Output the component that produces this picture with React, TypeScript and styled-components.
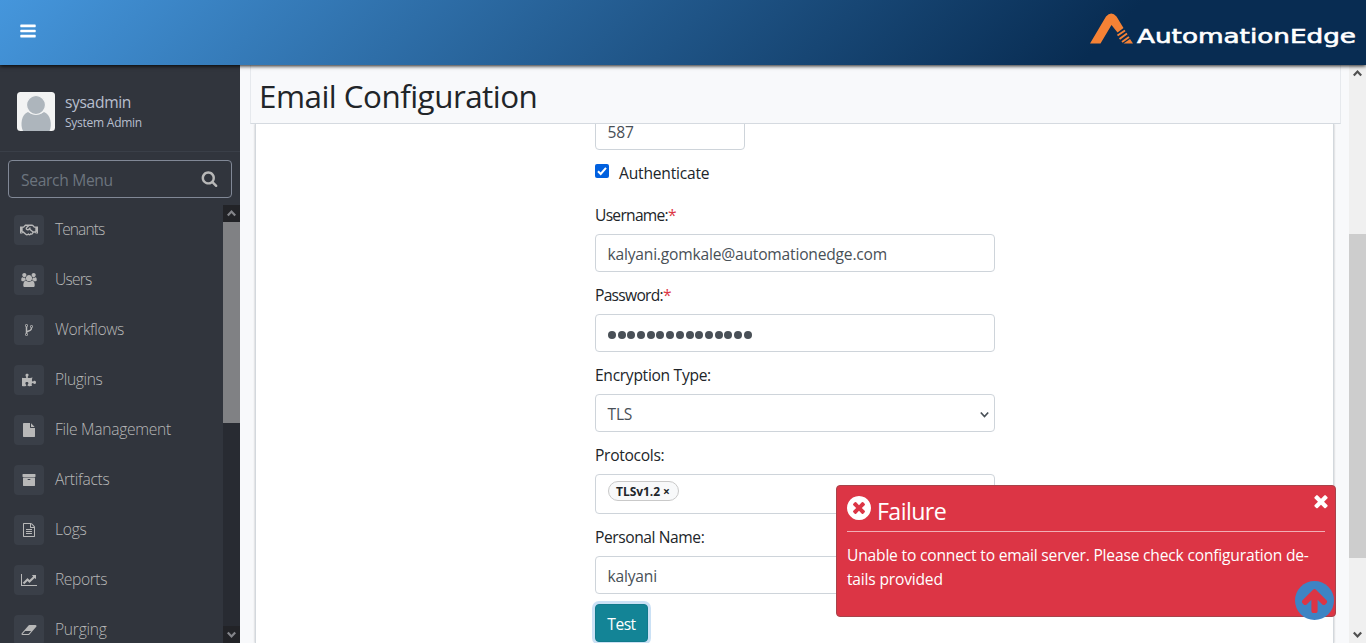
import React from "react";
import styled, { createGlobalStyle } from "styled-components";
import { FaRegHandshake, FaPuzzlePiece } from "react-icons/fa";

const Global = createGlobalStyle`
  * { box-sizing: border-box; }
  html, body { margin: 0; height: 100%; overflow: hidden; }
  body { font-family: "Open Sans", "Noto Sans", sans-serif; font-size: 15.6px; letter-spacing: -0.2px; line-height: 24px; color: #212529; background: #f8f9fb; }
  #root { height: 100%; }
`;

const icons = {
  bars: ["0 0 1792 1792", "M1664 1344v128q0 26-19 45t-45 19h-1408q-26 0-45-19t-19-45v-128q0-26 19-45t45-19h1408q26 0 45 19t19 45zm0-512v128q0 26-19 45t-45 19h-1408q-26 0-45-19t-19-45v-128q0-26 19-45t45-19h1408q26 0 45 19t19 45zm0-512v128q0 26-19 45t-45 19h-1408q-26 0-45-19t-19-45v-128q0-26 19-45t45-19h1408q26 0 45 19t19 45z"],
  search: ["0 0 1792 1792", "M1216 832q0-185-131.5-316.5t-316.5-131.5-316.5 131.5-131.5 316.5 131.5 316.5 316.5 131.5 316.5-131.5 131.5-316.5zm512 832q0 52-38 90t-90 38q-54 0-90-38l-343-342q-179 124-399 124-143 0-273.5-55.5t-225-150-150-225-55.5-273.5 55.5-273.5 150-225 225-150 273.5-55.5 273.5 55.5 225 150 150 225 55.5 273.5q0 220-124 399l343 343q37 37 37 90z"],
  times: ["0 0 1792 1792", "M1490 1322q0 40-28 68l-136 136q-28 28-68 28t-68-28l-294-294-294 294q-28 28-68 28t-68-28l-136-136q-28-28-28-68t28-68l294-294-294-294q-28-28-28-68t28-68l136-136q28-28 68-28t68 28l294 294 294-294q28-28 68-28t68 28l136 136q28 28 28 68t-28 68l-294 294 294 294q28 28 28 68z"],
  timesCircle: ["128 128 1536 1536", "M1277 1122q0-26-19-45l-181-181 181-181q19-19 19-45 0-27-19-46l-90-90q-19-19-46-19-26 0-45 19l-181 181-181-181q-19-19-45-19-27 0-46 19l-90 90q-19 19-19 46 0 26 19 45l181 181-181 181q-19 19-19 45 0 27 19 46l90 90q19 19 46 19 26 0 45-19l181-181 181 181q19 19 45 19 27 0 46-19l90-90q19-19 19-46zm387-226q0 209-103 385.5t-279.5 279.5-385.5 103-385.5-103-279.5-279.5-103-385.5 103-385.5 279.5-279.5 385.5-103 385.5 103 279.5 279.5 103 385.5z"],
  arrowUp: ["0 0 1792 1792", "M1675 971q0 51-37 90l-75 75q-38 38-91 38-54 0-90-38l-294-293v704q0 52-37.5 84.5t-90.5 32.5h-128q-53 0-90.5-32.5t-37.5-84.5v-704l-294 293q-36 38-90 38t-90-38l-75-75q-38-38-38-90 0-53 38-91l651-651q35-37 90-37 54 0 91 37l651 651q37 39 37 91z"],
  file: ["0 0 1792 1792", "M1152 512v-472q22 14 36 28l408 408q14 14 28 36h-472zm-128 32q0 40 28 68t68 28h544v1056q0 40-28 68t-68 28h-1344q-40 0-68-28t-28-68v-1600q0-40 28-68t68-28h800v544z"],
  fileText: ["0 0 1792 1792", "M1596 380q28 28 48 76t20 88v1152q0 40-28 68t-68 28h-1344q-40 0-68-28t-28-68v-1600q0-40 28-68t68-28h896q40 0 88 20t76 48zm-444-244v376h376q-10-29-22-41l-313-313q-12-12-41-22zm384 1528v-1024h-416q-40 0-68-28t-28-68v-416h-768v1536h1280zm-1024-864q0-14 9-23t23-9h704q14 0 23 9t9 23v64q0 14-9 23t-23 9h-704q-14 0-23-9t-9-23v-64zm736 224q14 0 23 9t9 23v64q0 14-9 23t-23 9h-704q-14 0-23-9t-9-23v-64q0-14 9-23t23-9h704zm0 256q14 0 23 9t9 23v64q0 14-9 23t-23 9h-704q-14 0-23-9t-9-23v-64q0-14 9-23t23-9h704z"],
  archive: ["0 0 1792 1792", "M1088 832q0-26-19-45t-45-19h-256q-26 0-45 19t-19 45 19 45 45 19h256q26 0 45-19t19-45zm576-192v960q0 26-19 45t-45 19h-1408q-26 0-45-19t-19-45v-960q0-26 19-45t45-19h1408q26 0 45 19t19 45zm64-448v256q0 26-19 45t-45 19h-1536q-26 0-45-19t-19-45v-256q0-26 19-45t45-19h1536q26 0 45 19t19 45z"],
  chart: ["0 0 2048 1792", "M2048 1536v128h-2048v-1536h128v1408h1920zm-128-1248v435q0 21-19.5 29.5t-35.5-7.5l-121-121-633 633q-10 10-23 10t-23-10l-233-233-416 416-192-192 585-585q10-10 23-10t23 10l233 233 464-464-121-121q-16-16-7.5-35.5t29.5-19.5h435q14 0 23 9t9 23z"],
  fork: ["0 0 1792 1792", "M672 1472q0-40-28-68t-68-28-68 28-28 68 28 68 68 28 68-28 28-68zm0-1152q0-40-28-68t-68-28-68 28-28 68 28 68 68 28 68-28 28-68zm640 128q0-40-28-68t-68-28-68 28-28 68 28 68 68 28 68-28 28-68zm96 0q0 52-26 96.5t-70 69.5q-2 287-226 414-67 38-203 81-128 40-169.5 71t-41.5 100v26q44 25 70 69.5t26 96.5q0 80-56 136t-136 56-136-56-56-136q0-52 26-96.5t70-69.5v-820q-44-25-70-69.5t-26-96.5q0-80 56-136t136-56 136 56 56 136q0 52-26 96.5t-70 69.5v497q54-26 154-57 55-17 87.5-29.5t70.5-31 59-39.5 40.5-51 28-69.5 8.5-91.5q-44-25-70-69.5t-26-96.5q0-80 56-136t136-56 136 56 56 136z"],
  eraser: ["0 0 2048 1792", "M960 1408l336-384h-768l-336 384h768zm1013-1077q15 34 9.500 71.500t-30.500 65.500l-896 1024q-38 44-96 44h-768q-38 0-69.500-20.500t-47.500-54.500q-15-34-9.500-71.500t30.500-65.500l896-1024q38-44 96-44h768q38 0 69.500 20.500t47.500 54.500z"],
  users: ["0 0 1920 1792", "M593 896q-162 5-265 128h-134q-82 0-138-40.5t-56-118.5q0-353 124-353 6 0 43.5 21t97.5 42.5 119 21.5q67 0 133-23-5 37-5 66 0 139 81 256zm1071 637q0 120-73 189.500t-194 69.500h-874q-121 0-194-69.500t-73-189.500q0-53 3.500-103.500t14-109 26.500-108.500 43-97.500 62-81 85.500-53.500 111.500-20q10 0 43 21.500t73 48 107 48 135 21.500 135-21.500 107-48 73-48 43-21.500q61 0 111.500 20t85.500 53.500 62 81 43 97.500 26.500 108.500 14 109 3.500 103.500zm-1024-1277q0 106-75 181t-181 75-181-75-75-181 75-181 181-75 181 75 75 181zm704 384q0 159-112.500 271.500t-271.500 112.500-271.500-112.500-112.500-271.500 112.500-271.500 271.500-112.500 271.500 112.500 112.500 271.500zm576 225q0 78-56 118.500t-138 40.500h-134q-103-123-265-128 81-117 81-256 0-29-5-66 66 23 133 23 59 0 119-21.500t97.500-42.500 43.500-21q124 0 124 353zm-128-609q0 106-75 181t-181 75-181-75-75-181 75-181 181-75 181 75 75 181z"],
} as const;

type IconName = keyof typeof icons;

const Svg = styled.svg`display: block; flex: none; fill: currentColor;`;
const Icon = ({ name, w, h = w }: { name: IconName; w: number; h?: number }) => (
  <Svg width={w} height={h} viewBox={icons[name][0]}><path d={icons[name][1]} /></Svg>
);

const Page = styled.div`height: 643px; display: flex; flex-direction: column; overflow: hidden;`;
const Header = styled.header`
  height: 65px; flex: none; display: flex; align-items: center; justify-content: space-between;
  padding: 0 8px 0 19px; color: #fff; z-index: 3;
  background: linear-gradient(135deg, #4596dc 0%, #082c52 80%);
  box-shadow: 0 1px 4px rgba(0, 0, 0, 0.9);
`;
const MenuButton = styled.button`
  border: 0; padding: 0; margin-top: -4px; background: none; color: #fff;
`;
const Body = styled.div`flex: 1; display: flex; min-height: 0;`;

const Sidebar = styled.aside`
  width: 240px; flex: none; display: flex; flex-direction: column; background: #31353d; color: #b8bfce;
`;
const Profile = styled.div`
  height: 87px; flex: none; padding: 27px 17px 0; display: flex; gap: 10px; border-bottom: 1px solid #3a3f48;
`;
const ProfileName = styled.div`
  line-height: 20px; letter-spacing: -0.35px;
  small { display: block; font-size: 12px; line-height: 22px; letter-spacing: -0.25px; }
`;
const Search = styled.div`
  flex: none; margin: 8px 8px 0; height: 38px; border: 1px solid #818896; border-radius: 4px;
  display: flex; align-items: center; justify-content: space-between; padding: 2px 13px 0 12px; color: #6c747e;
  letter-spacing: -0.32px;
  svg { color: #b8b8b8; margin-top: -3px; }
`;
const MenuArea = styled.div`flex: 1; min-height: 0; margin-top: 7px; display: flex; overflow: hidden;`;
const MenuList = styled.nav`flex: 1; overflow: hidden;`;
const MenuItem = styled.a`
  height: 50px; padding: 0 14px; display: flex; align-items: center; gap: 11px; color: #b8b8b8; font-weight: 300;
`;
const IconTile = styled.span`
  width: 30px; height: 30px; border-radius: 4px; background: #3a3f48; display: flex; align-items: center; justify-content: center;
`;
const ItemText = styled.span<{ $ls: number }>`padding-bottom: 2px; letter-spacing: ${(p) => p.$ls}px;`;

const Bar = styled.div<{ $dark?: boolean }>`
  width: 17px; flex: none; display: flex; flex-direction: column;
  background: ${(p) => (p.$dark ? "#282b32" : "#f0f0f0")};
  color: ${(p) => (p.$dark ? "#84858a" : "#505050")};
`;
const BarEnd = styled.div<{ $dark?: boolean }>`
  height: 17px; flex: none; display: flex; align-items: center; justify-content: center;
  background: ${(p) => (p.$dark ? "#222327" : "transparent")};
  svg { fill: none; stroke: currentColor; stroke-width: 2.2; }
`;
const Thumb = styled.div<{ $gap: number; $h: number; $dark?: boolean }>`
  margin-top: ${(p) => p.$gap}px; height: ${(p) => p.$h}px;
  background: ${(p) => (p.$dark ? "#808184" : "#cdcdcd")};
`;
const Spacer = styled.div`flex: 1;`;

const Main = styled.main`flex: 1; min-width: 0; display: flex; flex-direction: column; padding: 0 8px 0 10px;`;
const Title = styled.h1`
  margin: 0; height: 59px; flex: none; padding: 2px 0 0 8px; font-size: 31.4px; font-weight: 400; line-height: 57px;
  letter-spacing: -0.52px;
  border: 1px solid #e6e9ed; border-top: 0; border-bottom: 1px solid #d5dae0; background: #f8f9fb; z-index: 1;
`;
const Card = styled.section`
  flex: 1; min-height: 0; margin: 0 7px 0 5px; background: #fff; overflow: hidden;
  border: solid #d3d8dd; border-width: 0 1px; box-shadow: 0 0 2px rgba(0, 0, 0, 0.25);
`;
const Form = styled.form`width: 400px; margin-left: 339px; margin-top: -12px; display: flex; flex-direction: column;`;
const Label = styled.label<{ $ls?: number }>`
  height: 24px; margin: 11px 0 7px; letter-spacing: ${(p) => p.$ls ?? -0.3}px;
  b { color: #dc3545; font-weight: 400; }
`;
const Field = styled.div<{ $w?: number; $h?: number }>`
  width: ${(p) => p.$w ?? 400}px; height: ${(p) => p.$h ?? 38}px; flex: none; padding: 2px 5px 0 11.5px;
  display: flex; align-items: center; justify-content: space-between;
  border: 1px solid #ced4da; border-radius: 4px; color: #495057; background: #fff;
`;
const CheckRow = styled.label`height: 24px; margin: 11px 0 7px; display: flex; gap: 10px;`;
const CheckBox = styled.span`
  width: 14px; height: 14px; margin-top: 3px; border-radius: 2px; background: #0060df; display: flex;
`;
const Dots = styled.span`display: flex; gap: 1.7px; padding: 2px 0 0 0.5px;`;
const Dot = styled.i`width: 8px; height: 8px; border-radius: 50%; background: #495057;`;
const Chip = styled.span`
  height: 20px; width: 71px; margin-top: -8px; padding: 0 0 0 7.5px; border: 1px solid #c9c9c9; border-radius: 10px;
  background: #f8f9fa; color: #212529; font-size: 12px; font-weight: 700; line-height: 19px; letter-spacing: -0.05px;
`;
const TestButton = styled.button`
  margin-top: 10px; width: 53px; height: 38px; border: 1px solid #117a8b; border-radius: 4px; padding: 2px 0 0;
  background: #138496; color: #fff; font: inherit; letter-spacing: -0.5px; box-shadow: 0 0 0 3px #cbe1f5;
`;

const Toast = styled.div`
  position: fixed; left: 836px; top: 485px; width: 500px; height: 132px; z-index: 4; padding: 10px 10px 0;
  border: 1px solid #a8434a; border-radius: 4px; background: #dc3545; color: #fff;
`;
const ToastHead = styled.div`
  height: 36px; display: flex; gap: 6px; border-bottom: 1px solid #f1aeb5; font-size: 23.2px; line-height: 30px;
  letter-spacing: -0.6px;
`;
const ToastBody = styled.p`margin: 11px 0 0; letter-spacing: -0.19px; white-space: nowrap;`;
const ToastClose = styled.button`
  position: absolute; right: 4px; top: 5px; border: 0; padding: 0; background: none; color: #fff;
`;
const ToTop = styled.button`
  position: fixed; left: 1295px; top: 581px; z-index: 5; width: 39px; height: 39px; border: 0; padding: 0; border-radius: 50%;
  background: #3e84c4; color: #dc3545; display: flex; align-items: center; justify-content: center;
`;

const Chevron = ({ up, size = 9 }: { up?: boolean; size?: number }) => (
  <svg width={size} height={size} viewBox="0 0 9 9" fill="none" stroke="currentColor" strokeWidth="1.7">
    <path d={up ? "M.8 6.500 4.500 2.500 8.200 6.500" : "M.8 2.500 4.500 6.500 8.200 2.500"} />
  </svg>
);

const Scrollbar = ({ dark, gap, h }: { dark?: boolean; gap: number; h: number }) => (
  <Bar $dark={dark}>
    <BarEnd $dark={dark}><Chevron up /></BarEnd>
    <Thumb $dark={dark} $gap={gap} $h={h} />
    <Spacer />
    <BarEnd $dark={dark}><Chevron /></BarEnd>
  </Bar>
);

const Logo = () => (
  <svg width="270" height="44" viewBox="0 0 270 44">
    <path fill="#f58235" d="M2 32.500 18 5.500Q23.300-.5 28.500 5.500L35.500 17 29.500 21.500 23.500 14 12.500 32.500Z" />
    <path fill="none" stroke="#f58235" strokeWidth="2" d="M29.500 24.500 37 19.500M31.500 28 39 22.500M34 31 41 26" />
    <path fill="#f58235" d="M35.500 32.500 42 28 45 32.500Z" />
    <text x="49" y="32" textLength="219" lengthAdjust="spacingAndGlyphs" fill="#fff" fontFamily="DejaVu Sans" fontSize="19.5" letterSpacing="0" stroke="#fff" strokeWidth=".6">AutomationEdge</text>
  </svg>
);

const menu: [string, React.ReactNode, number][] = [
  ["Tenants", <FaRegHandshake size={18} />, -0.95],
  ["Users", <Icon name="users" w={16} h={14.5} />, -0.8],
  ["Workflows", <Icon name="fork" w={14} />, -0.4],
  ["Plugins", <FaPuzzlePiece size={14} />, -0.35],
  ["File Management", <Icon name="file" w={14} />, -0.28],
  ["Artifacts", <Icon name="archive" w={14} />, -0.28],
  ["Logs", <Icon name="fileText" w={14} />, -0.25],
  ["Reports", <Icon name="chart" w={16} h={14} />, -0.4],
  ["Purging", <Icon name="eraser" w={16} h={14} />, -0.25],
];

export default function App() {
  return (
    <Page>
      <Global />
      <Header>
        <MenuButton aria-label="Toggle menu"><Icon name="bars" w={18} /></MenuButton>
        <Logo />
      </Header>
      <Body>
        <Sidebar>
          <Profile>
            <svg width="38" height="39" viewBox="0 0 38 39">
              <rect width="38" height="39" rx="3.500" fill="#f2f3f3" />
              <path fill="#adb5bc" d="M6 39C3 33 4.500 22 11 20Q19 26 27 20C33.500 22 35.500 33 32.500 39Z" />
              <circle cx="19" cy="13" r="9.500" fill="#adb5bc" stroke="#f2f3f3" strokeWidth="1.200" />
            </svg>
            <ProfileName>sysadmin<small>System Admin</small></ProfileName>
          </Profile>
          <Search><span>Search Menu</span><Icon name="search" w={17} /></Search>
          <MenuArea>
            <MenuList>
              {menu.map(([label, icon, ls]) => (
                <MenuItem key={label}><IconTile>{icon}</IconTile><ItemText $ls={ls}>{label}</ItemText></MenuItem>
              ))}
            </MenuList>
            <Scrollbar dark gap={0} h={201} />
          </MenuArea>
        </Sidebar>
        <Main>
          <Title>Email Configuration</Title>
          <Card>
            <Form>
              <Field $w={150}>587</Field>
              <CheckRow>
                <CheckBox>
                  <svg width="14" height="14" viewBox="0 0 14 14"><path d="M3 7.200 5.700 10 11 3.800" fill="none" stroke="#fff" strokeWidth="2" /></svg>
                </CheckBox>
                <span>Authenticate</span>
              </CheckRow>
              <Label $ls={-0.72}>Username:<b>*</b></Label>
              <Field>kalyani.gomkale@automationedge.com</Field>
              <Label $ls={-0.72}>Password:<b>*</b></Label>
              <Field><Dots>{Array.from({ length: 15 }, (_, i) => <Dot key={i} />)}</Dots></Field>
              <Label>Encryption Type:</Label>
              <Field>TLS<Chevron /></Field>
              <Label>Protocols:</Label>
              <Field $h={40}><Chip>TLSv1.2 ×</Chip></Field>
              <Label $ls={-0.42}>Personal Name:</Label>
              <Field>kalyani</Field>
              <TestButton type="button">Test</TestButton>
            </Form>
          </Card>
        </Main>
        <Scrollbar gap={152} h={324} />
      </Body>
      <Toast role="alert">
        <ToastHead><Icon name="timesCircle" w={24} /><span>Failure</span></ToastHead>
        <ToastBody>Unable to connect to email server. Please check configuration de-<br />tails provided</ToastBody>
        <ToastClose aria-label="Close"><Icon name="times" w={20} /></ToastClose>
      </Toast>
      <ToTop aria-label="Back to top"><Icon name="arrowUp" w={29} /></ToTop>
    </Page>
  );
}
